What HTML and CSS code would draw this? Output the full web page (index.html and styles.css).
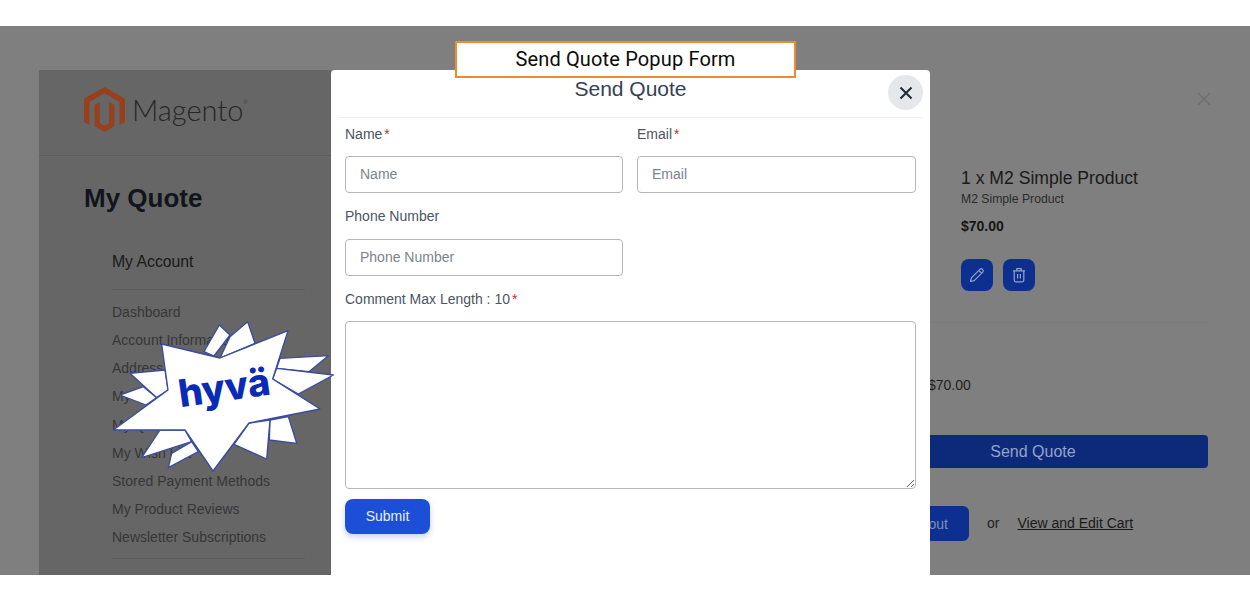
FILE: index.html
```html
<!DOCTYPE html>
<html lang="en">
<head>
    <meta charset="UTF-8">
    <title>Send Quote Popup Form</title>
    <link rel="stylesheet" href="styles.css">
</head>
<body>
    <div class="stage">
        <div class="page">
            <aside class="sidebar">
                <div class="logo-bar">
                    <svg class="logo-mark" viewBox="0 0 41 45">
                        <path fill="#983f1c" d="M20.5 0L41 11.8V35L35.6 38V14.9L20.5 6.2L5.4 14.9V38L0 35V11.8Z"/>
                        <path fill="#983f1c" d="M10.6 17.9L15.8 14.9V36L20.5 38.8L25.2 36V14.9L30.4 17.9V39L20.5 45L10.6 39Z"/>
                    </svg>
                    <span class="logo-text">Magento</span><span class="logo-reg">®</span>
                </div>
                <div class="sidebar-body">
                    <h1 class="page-title">My Quote</h1>
                    <nav class="account-nav">
                        <div class="nav-title">My Account</div>
                        <a class="nav-link">Dashboard</a>
                        <a class="nav-link">Account Information</a>
                        <a class="nav-link">Address Book</a>
                        <a class="nav-link">My Orders</a>
                        <a class="nav-link">My Quotes</a>
                        <a class="nav-link">My Wish List</a>
                        <a class="nav-link">Stored Payment Methods</a>
                        <a class="nav-link">My Product Reviews</a>
                        <a class="nav-link">Newsletter Subscriptions</a>
                        <div class="nav-end"></div>
                    </nav>
                </div>
            </aside>

            <main class="cart">
                <div class="cart-close">
                    <svg viewBox="0 0 14 14" width="14" height="14"><path d="M1 1L13 13M13 1L1 13" stroke="#6e6e6e" stroke-width="1.2" fill="none"/></svg>
                </div>
                <div class="cart-item">
                    <div class="item-name">1 x M2 Simple Product</div>
                    <div class="item-sub">M2 Simple Product</div>
                    <div class="item-price">$70.00</div>
                    <div class="item-actions">
                        <button class="icon-btn">
                            <svg viewBox="0 0 16 16" width="16" height="16"><path d="M1.5 14.5L2.4 10.8L10.9 2.3C11.6 1.6 12.8 1.6 13.6 2.4C14.4 3.2 14.4 4.4 13.7 5.1L5.2 13.6L1.5 14.5ZM9.8 3.4L12.6 6.2" stroke="#94a3c8" stroke-width="1.2" fill="none" stroke-linejoin="round"/></svg>
                        </button>
                        <button class="icon-btn">
                            <svg viewBox="0 0 16 16" width="16" height="16"><path d="M2 3.8H14M5.8 3.8V1.6H10.2V3.8M3.2 3.8V13C3.2 14 3.9 14.8 4.9 14.8H11.1C12.1 14.8 12.8 14 12.8 13V3.8M6.6 7V11.6M9.4 7V11.6" stroke="#94a3c8" stroke-width="1.2" fill="none" stroke-linejoin="round"/></svg>
                        </button>
                    </div>
                </div>
                <div class="cart-total">$70.00</div>
                <button class="send-btn">Send Quote</button>
                <div class="cart-links">
                    <button class="checkout-btn">Checkout</button>
                    <span class="or">or</span>
                    <a class="edit-link">View and Edit Cart</a>
                </div>
            </main>
        </div>

        <!-- popup sits over the page -->
        <div class="modal">
            <div class="modal-head">
                <h2 class="modal-title">Send Quote</h2>
                <button class="modal-close">
                    <svg viewBox="0 0 14 14" width="14" height="14"><path d="M1.5 1.5L12.5 12.5M12.5 1.5L1.5 12.5" stroke="#1f2937" stroke-width="2" fill="none"/></svg>
                </button>
            </div>
            <form class="quote-form">
                <div class="field">
                    <label class="field-label">Name<span class="req">*</span></label>
                    <input class="field-input" type="text" placeholder="Name">
                </div>
                <div class="field">
                    <label class="field-label">Email<span class="req">*</span></label>
                    <input class="field-input" type="text" placeholder="Email">
                </div>
                <div class="field">
                    <label class="field-label phone-label">Phone Number</label>
                    <input class="field-input" type="text" placeholder="Phone Number">
                </div>
                <div class="field field-wide">
                    <label class="field-label">Comment Max Length : 10<span class="req">*</span></label>
                    <textarea class="field-area"></textarea>
                </div>
                <div class="field-wide">
                    <button class="submit-btn" type="button">Submit</button>
                </div>
            </form>
        </div>

        <div class="caption">Send Quote Popup Form</div>

        <div class="hyva">
            <svg class="hyva-star" viewBox="0 0 750 510">
                <g fill="#fff" stroke="#3a4ba0" stroke-width="4" stroke-linejoin="round">
                    <polygon points="358,45 390,75 342,138 312,125"/>
                    <polygon points="443,35 465,100 360,144 390,80"/>
                    <polygon points="685,137 627,185 530,175 540,145"/>
                    <polygon points="700,195 595,252 518,207 530,175"/>
                    <polygon points="565,320 590,400 508,390 510,330"/>
                    <polygon points="510,330 500,447 402,403 447,339"/>
                    <polygon points="125,443 180,360 255,360 275,395"/>
                    <polygon points="205,473 215,430 275,395 295,425"/>
                    <polygon points="90,190 195,180 204,240 170,263"/>
                    <polygon points="60,255 130,230 170,263 138,285"/>
                    <polygon points="185,102 360,144 564,62 518,207 660,297 447,339 339,483 255,360 40,360 204,240"/>
                </g>
            </svg>
            <span class="hyva-word">hyvä</span>
        </div>
    </div>
</body>
</html>
```

FILE: styles.css
```css
* {
    box-sizing: border-box;
}

body {
    margin: 0;
    height: 600px;
    padding-top: 26px;
    background-color: white;
    font-family: "Liberation Sans", Arial, sans-serif;
    overflow: hidden;
}

.stage {
    position: relative;
    height: 549px;
    padding-top: 44px;
    background-color: #7f7f7f;
    overflow: hidden;
}

.page {
    display: flex;
    padding-left: 39px;
}

/* Sidebar */
.sidebar {
    width: 292px;
    height: 505px;
    flex-shrink: 0;
    background-color: #666;
}

.logo-bar {
    display: flex;
    align-items: center;
    height: 86px;
    padding: 0 0 6px 45px;
    border-bottom: 1px solid #5d5d5d;
}

.logo-mark {
    width: 41px;
    height: 45px;
    margin-right: 7px;
}

.logo-text {
    font-family: Lato, sans-serif;
    font-weight: 300;
    font-size: 29px;
    color: #262626;
}

.logo-reg {
    align-self: flex-start;
    margin-top: 29px;
    font-size: 6px;
    color: #444;
}

.sidebar-body {
    padding-left: 45px;
}

.page-title {
    margin: 26px 0 0;
    font-size: 26px;
    line-height: 32px;
    color: #12151c;
}

.account-nav {
    width: 221px;
    margin-top: 36px;
    padding-left: 28px;
}

.nav-title {
    height: 40px;
    margin-bottom: 8px;
    border-bottom: 1px solid #5d5d5d;
    font-size: 15.75px;
    line-height: 24px;
    color: #191919;
}

.nav-link {
    display: block;
    font-size: 14px;
    line-height: 28.12px;
    color: #363636;
}

.nav-end {
    margin-top: 7px;
    border-bottom: 1px solid #5d5d5d;
}

/* Cart panel behind the popup */
.cart {
    width: 350px;
    margin-left: auto;
    margin-right: 42px;
}

.cart-close {
    display: flex;
    justify-content: flex-end;
    height: 14px;
    margin: 22px -3px 0 0;
}

.cart-item {
    margin-top: 60px;
    padding: 0 0 31px 103px;
    border-bottom: 1px solid #7a7a7a;
}

.item-name {
    font-size: 17.6px;
    line-height: 25px;
    color: #1a1a1a;
}

.item-sub {
    font-size: 12.2px;
    line-height: 16px;
    color: #2b2b2b;
}

.item-price {
    margin-top: 9px;
    font-size: 14px;
    font-weight: bold;
    line-height: 20px;
    color: #151515;
}

.item-actions {
    display: flex;
    gap: 10px;
    margin-top: 23px;
}

.icon-btn {
    display: flex;
    align-items: center;
    justify-content: center;
    width: 32px;
    height: 32px;
    padding: 0;
    border: none;
    border-radius: 8px;
    background-color: #0d2f8f;
}

.cart-total {
    margin-top: 52px;
    padding-left: 70px;
    font-size: 14px;
    line-height: 20px;
    color: #1f1f1f;
}

.send-btn {
    display: block;
    width: 350px;
    height: 33px;
    margin-top: 40px;
    padding: 0;
    border: none;
    border-radius: 4px;
    background-color: #0d2a7a;
    color: #94a3c8;
    font-family: inherit;
    font-size: 16px;
}

.cart-links {
    display: flex;
    align-items: center;
    margin-top: 38px;
}

.checkout-btn {
    width: 111px;
    height: 35px;
    padding: 0 21px 0 0;
    border: none;
    border-radius: 6px;
    background-color: #0d2f8f;
    color: #7f8fb8;
    font-family: inherit;
    font-size: 14px;
    text-align: right;
}

.or {
    margin: 0 0 2px 18px;
    font-size: 14px;
    color: #222;
}

.edit-link {
    margin: 0 0 2px 18px;
    font-size: 14px;
    color: #1a1a1a;
    text-decoration: underline;
}

/* Popup */
.modal {
    position: absolute;
    top: 44px;
    left: 331px;
    width: 599px;
    height: 520px;
    border-radius: 4px;
    background-color: white;
}

.modal-head {
    display: flex;
    justify-content: center;
    position: relative;
    height: 48px;
    margin: 0 7px;
    border-bottom: 1px solid #eeeff1;
}

.modal-title {
    margin: 6px 0 0;
    font-size: 21px;
    font-weight: normal;
    line-height: 26px;
    color: #374151;
}

.modal-close {
    position: absolute;
    top: 5px;
    right: 0;
    display: flex;
    align-items: center;
    justify-content: center;
    width: 35px;
    height: 35px;
    padding: 0;
    border: none;
    border-radius: 50%;
    background-color: #e5e7eb;
}

.quote-form {
    display: grid;
    grid-template-columns: 278px 279px;
    column-gap: 14px;
    padding: 7px 14px 0;
}

.field-wide {
    grid-column: 1 / 3;
}

.field-label {
    display: block;
    height: 31px;
    font-size: 14px;
    line-height: 19px;
    color: #4b5563;
}

.phone-label {
    height: 32px;
}

.req {
    margin-left: 2px;
    color: #e02424;
}

.field-input {
    display: block;
    width: 100%;
    height: 37px;
    margin-bottom: 14px;
    padding: 0 14px 2px;
    border: 1px solid #b4b6ba;
    border-radius: 4px;
    font-family: inherit;
    font-size: 14px;
}

.field-input::placeholder {
    color: #7d838d;
}

.field-area {
    display: block;
    width: 100%;
    height: 168px;
    margin-bottom: 10px;
    border: 1px solid #b4b6ba;
    border-radius: 4px;
    font-family: inherit;
}

.submit-btn {
    width: 85px;
    height: 35px;
    padding: 0 0 2px;
    border: none;
    border-radius: 8px;
    background-color: #1d4ed8;
    box-shadow: 0 3px 6px rgba(29, 78, 216, 0.25);
    color: #e8eeff;
    font-family: inherit;
    font-size: 14px;
}

/* Overlays on top of the screenshot */
.caption {
    position: absolute;
    top: 15px;
    left: 455px;
    width: 341px;
    height: 37px;
    border: 2px solid #f08a2c;
    background-color: white;
    color: #0a0a0a;
    font-family: Roboto, sans-serif;
    font-size: 20px;
    letter-spacing: 0.15px;
    line-height: 33px;
    text-align: center;
}

.hyva {
    position: absolute;
    top: 284px;
    left: 100px;
    width: 250px;
    height: 170px;
}

.hyva-star {
    display: block;
    width: 250px;
    height: 170px;
}

.hyva-word {
    position: absolute;
    top: 53px;
    left: 78px;
    transform: rotate(-8deg);
    color: #0a2bb5;
    font-family: Inter, sans-serif;
    font-size: 38px;
    font-weight: 800;
    line-height: 48px;
}
```
